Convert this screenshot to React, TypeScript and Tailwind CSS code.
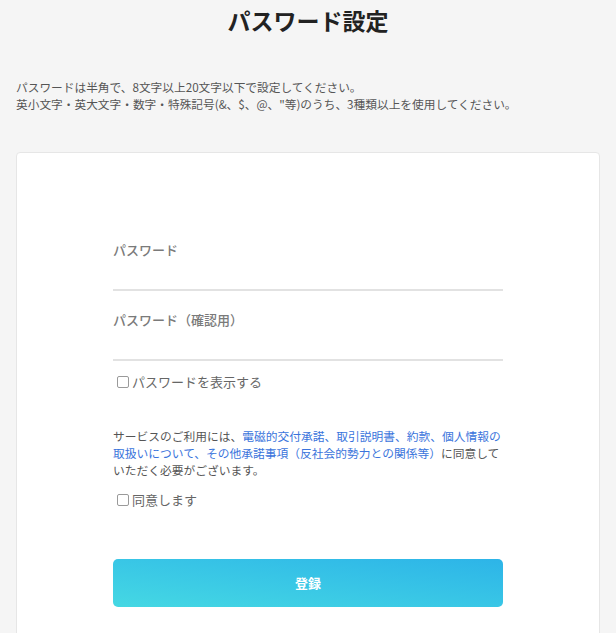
import React from "react";

const font = { fontFamily: '"Noto Sans CJK JP", "Noto Sans", sans-serif' };

function Box() {
  return <span className="inline-block w-[12px] h-[12px] border border-[#9a9a9a] rounded-[2px] bg-white mr-[3px] shrink-0" />;
}

function Field({ label }: { label: string }) {
  return (
    <div className="border-b-2 border-[#e2e2e2]">
      <div className="text-[13px] leading-[18px] text-[#7a7a7a] font-medium">{label}</div>
      <div className="h-[30px]" />
    </div>
  );
}

export default function App() {
  return (
    <div className="h-[633px] bg-[#f5f5f5] overflow-hidden" style={font}>
      <h1 className="pt-[6px] text-center text-[23px] leading-[28px] font-bold text-[#222]">パスワード設定</h1>
      <div className="mt-[44px] px-[16px] text-[11.7px] leading-[17px] text-[#555]">
        <p>パスワードは半角で、8文字以上20文字以下で設定してください。</p>
        <p>英小文字・英大文字・数字・特殊記号(&amp;、$、@、"等)のうち、3種類以上を使用してください。</p>
      </div>
      <div className="mx-[16px] mt-[40px] bg-white border border-[#e6e6e6] rounded-[4px] pt-[88px] pb-[60px]">
        <div className="w-[390px] mx-auto">
          <Field label="パスワード" />
          <div className="mt-[20px]">
            <Field label="パスワード（確認用）" />
          </div>
          <label className="mt-[12px] flex items-center pl-[4px] text-[13px] leading-[18px] text-[#666]">
            <Box />
            パスワードを表示する
          </label>
          <p className="mt-[36px] text-[11.75px] leading-[17px] text-[#555]">
            サービスのご利用には、
            <span className="text-[#3a74dc]">電磁的交付承諾、取引説明書、約款、個人情報の取扱いについて、その他承諾事項（反社会的勢力との関係等）</span>
            に同意していただく必要がございます。
          </p>
          <label className="mt-[13px] flex items-center pl-[4px] text-[13px] leading-[18px] text-[#666]">
            <Box />
            同意します
          </label>
          <button className="mt-[50px] w-full h-[48px] rounded-[5px] bg-gradient-to-tr from-[#45d8e3] to-[#2db4e8] text-white text-[13px] font-bold">
            登録
          </button>
        </div>
      </div>
    </div>
  );
}
